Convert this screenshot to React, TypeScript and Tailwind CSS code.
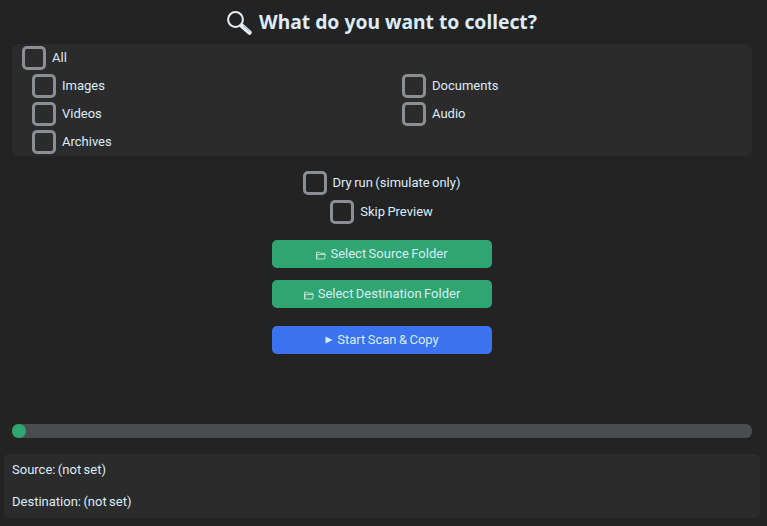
import React from "react";

const body = "font-['Roboto',sans-serif] text-[13px] text-[#dcecfa] [word-spacing:-0.8px]";

function Check({ label }: { label: string }) {
  return (
    <label className={`flex items-center gap-[6px] h-[24px] ${body}`}>
      <span className="block w-[24px] h-[24px] box-border rounded-[5px] border-[3px] border-[#8b8e92]" />
      <span>{label}</span>
    </label>
  );
}

function FolderIcon() {
  return (
    <svg width="10" height="9" viewBox="0 0 10 9" fill="none" stroke="#cfe6dc" strokeWidth="0.9" className="mr-[4px] mt-[3px] shrink-0">
      <path d="M0.5 8V1.2H3.4L4.3 2.2H8.5V3.4" />
      <path d="M0.5 8L1.6 3.4H9.5L8.5 8Z" />
    </svg>
  );
}

function ActionButton({ color, children }: { color: string; children: React.ReactNode }) {
  return (
    <button className={`flex items-center justify-center w-[220px] h-[28px] rounded-[5px] ${color} font-['Roboto',sans-serif] text-[13px] text-[#d8ecf5] [word-spacing:-0.8px]`}>
      {children}
    </button>
  );
}

export default function App() {
  return (
    <div className="w-[767px] h-[526px] bg-[#232323] overflow-hidden">
      <div className="w-[764px] h-full flex flex-col">
        <h1 className="flex items-center justify-center h-[44px] font-['Noto_Sans',sans-serif] font-bold text-[19.3px] text-[#dcecfa]">
          <svg width="26" height="26" viewBox="0 0 26 26" className="mr-[6px] mt-[1px]">
            <circle cx="8.5" cy="9.5" r="7.4" fill="none" stroke="#e4eef6" strokeWidth="2" />
            <path d="M15 16L22.5 22.5" stroke="#e4eef6" strokeWidth="4.5" strokeLinecap="round" />
            <path d="M16.5 16L23 21.5" stroke="#9aa7b2" strokeWidth="1" />
          </svg>
          What do you want to collect?
        </h1>

        <div className="mx-[12px] h-[112px] rounded-[6px] bg-[#2b2b2b] pt-[2px] pl-[10px]">
          <Check label="All" />
          <div className="grid grid-cols-[370px_1fr] gap-y-[4px] pl-[10px] mt-[4px]">
            <Check label="Images" />
            <Check label="Documents" />
            <Check label="Videos" />
            <Check label="Audio" />
            <Check label="Archives" />
          </div>
        </div>

        <div className="flex flex-col items-center mt-[15px] gap-[5px] pr-[1px]">
          <Check label="Dry run (simulate only)" />
          <Check label="Skip Preview" />
        </div>

        <div className="flex flex-col items-center mt-[16px]">
          <ActionButton color="bg-[#2fa572]">
            <FolderIcon />
            Select Source Folder
          </ActionButton>
          <div className="mt-[12px]">
            <ActionButton color="bg-[#2fa572]">
              <FolderIcon />
              Select Destination Folder
            </ActionButton>
          </div>
          <div className="mt-[18px]">
            <ActionButton color="bg-[#3b72f0]">
              <svg width="8" height="8" viewBox="0 0 8 8" className="mr-[4px]">
                <path d="M0.5 0.5L7.5 4L0.5 7.5Z" fill="#d8ecf5" />
              </svg>
              Start Scan &amp; Copy
            </ActionButton>
          </div>
        </div>

        <div className="mx-[12px] mt-[70px] h-[14px] rounded-[6px] bg-[#4a4d50] shrink-0">
          <div className="w-[14px] h-[14px] rounded-full bg-[#2fa572]" />
        </div>

        <div className={`mx-[4px] mt-[16px] h-[64px] rounded-[5px] bg-[#2b2b2b] pl-[8px] flex flex-col justify-around ${body}`}>
          <p>Source: (not set)</p>
          <p>Destination: (not set)</p>
        </div>
      </div>
    </div>
  );
}
